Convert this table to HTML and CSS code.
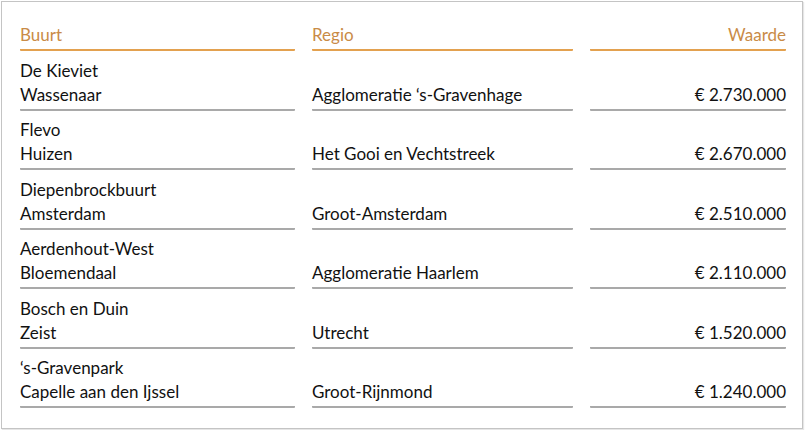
FILE: index.html
```html
<!DOCTYPE html>
<html lang="nl">
<head>
<meta charset="utf-8">
<title>Duurste buurten</title>
<link rel="stylesheet" href="styles.css">
</head>
<body>
<div class="frame">
  <div class="table">
    <div class="row head">
      <div class="cell">Buurt</div>
      <div class="cell">Regio</div>
      <div class="cell num">Waarde</div>
    </div>
    <div class="row">
      <div class="cell"><span>De Kieviet</span><span>Wassenaar</span></div>
      <div class="cell">Agglomeratie ‘s-Gravenhage</div>
      <div class="cell num">€ 2.730.000</div>
    </div>
    <div class="row">
      <div class="cell"><span>Flevo</span><span>Huizen</span></div>
      <div class="cell">Het Gooi en Vechtstreek</div>
      <div class="cell num">€ 2.670.000</div>
    </div>
    <div class="row">
      <div class="cell"><span>Diepenbrockbuurt</span><span>Amsterdam</span></div>
      <div class="cell">Groot-Amsterdam</div>
      <div class="cell num">€ 2.510.000</div>
    </div>
    <div class="row">
      <div class="cell"><span>Aerdenhout-West</span><span>Bloemendaal</span></div>
      <div class="cell">Agglomeratie Haarlem</div>
      <div class="cell num">€ 2.110.000</div>
    </div>
    <div class="row">
      <div class="cell"><span>Bosch en Duin</span><span>Zeist</span></div>
      <div class="cell">Utrecht</div>
      <div class="cell num">€ 1.520.000</div>
    </div>
    <div class="row">
      <div class="cell"><span>‘s-Gravenpark</span><span>Capelle aan den Ijssel</span></div>
      <div class="cell">Groot-Rijnmond</div>
      <div class="cell num">€ 1.240.000</div>
    </div>
  </div>
</div>
</body>
</html>
```

FILE: styles.css
```css
* { box-sizing: border-box; }
html, body { margin: 0; padding: 0; background: #ffffff; }
body {
  font-family: Lato, "Open Sans", "Liberation Sans", sans-serif;
  font-size: 17px;
  color: #111111;
}
.frame {
  margin: 1px;
  width: 802px;
  height: 428px;
  border: 1px solid #c4c4c4;
  box-shadow: 1px 1px 1px #e6e6e6;
  padding: 21px 18px 0 18px;
}
.table {
  display: flex;
  flex-direction: column;
}
.row {
  display: grid;
  grid-template-columns: 275px 261px 196px;
  column-gap: 17px;
}
.cell {
  display: flex;
  flex-direction: column;
  justify-content: flex-end;
  line-height: 24px;
  padding: 7.5px 0 2px 0;
  border-bottom: 2px solid #a9a9a9;
  border-radius: 1px;
}
.cell.num { text-align: right; align-items: flex-end; }
.head .cell {
  color: #c98b47;
  border-bottom-color: #e3a14f;
  padding: 0 0 2px 0;
}
```
